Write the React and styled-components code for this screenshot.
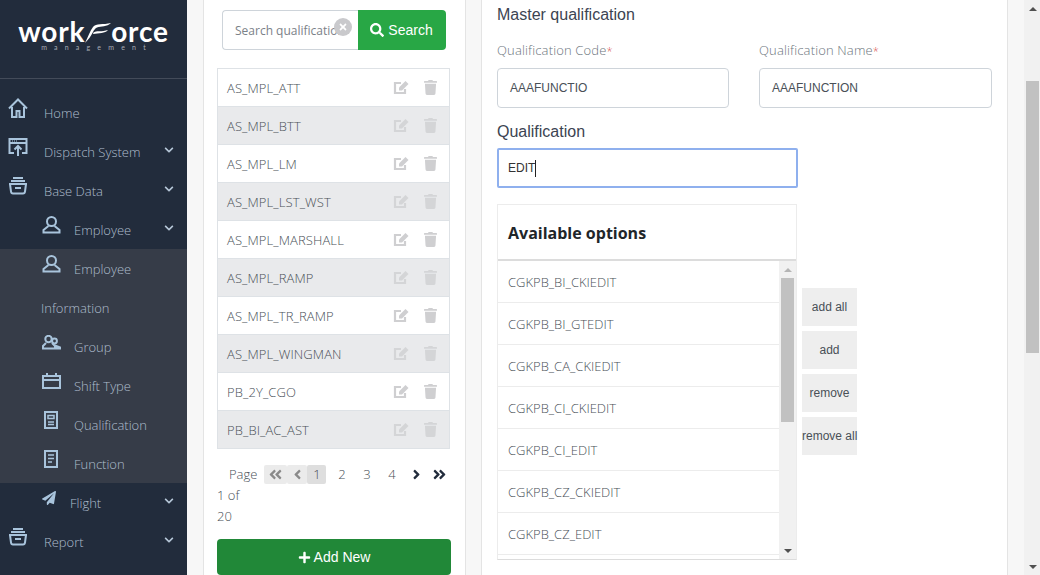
import styled, { createGlobalStyle } from 'styled-components'
import {
  FaChevronDown,
  FaTrash,
  FaSearch,
  FaPlus,
  FaTimes,
  FaPaperPlane,
  FaAngleDoubleLeft,
  FaAngleDoubleRight,
  FaAngleLeft,
  FaAngleRight,
} from 'react-icons/fa'

const GlobalStyle = createGlobalStyle`
  html, body {
    margin: 0;
    padding: 0;
    height: 575px;
    overflow: hidden;
  }
  * { box-sizing: border-box; }
`

const Page = styled.div`
  display: flex;
  width: 1040px;
  height: 575px;
  overflow: hidden;
  background: #f7f7f7;
  font-family: 'Open Sans', sans-serif;
`

const Sidebar = styled.nav`
  flex: 0 0 187px;
  background: #222c3c;
  display: flex;
  flex-direction: column;
`
const LogoBlock = styled.div`
  height: 79px;
  flex: none;
  border-bottom: 1px solid #434b59;
  padding-top: 19px;
  display: flex;
  flex-direction: column;
  align-items: center;
`
const LogoWord = styled.div`
  display: flex;
  align-items: flex-end;
  height: 24px;
  color: #fff;
  font-family: 'Lato', sans-serif;
  font-size: 28px;
  font-weight: 700;
  line-height: 24px;
  letter-spacing: 0.8px;
`
const LogoSub = styled.div`
  color: #a9adb5;
  font-family: 'Lato', sans-serif;
  font-size: 7px;
  line-height: 8px;
  letter-spacing: 7.2px;
  margin-left: 7px;
`
const Menu = styled.div`
  padding-top: 14px;
  display: flex;
  flex-direction: column;
`
const SubMenu = styled.div`
  background: #363c48;
  display: flex;
  flex-direction: column;
`
const MenuRow = styled.div`
  height: 39px;
  display: flex;
  align-items: center;
  padding-left: ${(p) => p.$indent}px;
  padding-right: 13px;
  color: #aebccd;
  font-size: 13px;
  font-weight: 300;
`
const MenuIcon = styled.span`
  flex: 0 0 ${(p) => p.$width}px;
  height: 20px;
  margin-top: -9px;
  display: flex;
  align-items: center;
  color: #a9c4dc;
`
const MenuLabel = styled.span`
  flex: 1;
`
const MenuChevron = styled(FaChevronDown)`
  font-size: 10px;
  color: #b6c7d8;
  margin-top: -4px;
`

const LeftPanel = styled.section`
  flex: 0 0 263px;
  margin-left: 16px;
  background: #fff;
  border-left: 1px solid #e4e4e4;
  border-right: 1px solid #e4e4e4;
  padding: 10px 14px 0 13px;
`
const SearchGroup = styled.div`
  display: flex;
  height: 40px;
  margin: 0 5px 18px 5px;
`
const SearchField = styled.div`
  position: relative;
  flex: 1;
  border: 1px solid #ced4da;
  border-right: 0;
  border-radius: 4px 0 0 4px;
  padding-left: 12px;
  display: flex;
  align-items: center;
  overflow: hidden;
  white-space: nowrap;
  color: #7b8188;
  font-size: 12px;
`
const ClearButton = styled.span`
  position: absolute;
  right: 6px;
  top: 7px;
  width: 18px;
  height: 18px;
  border-radius: 50%;
  background: #c9c9cc;
  color: #fff;
  display: flex;
  align-items: center;
  justify-content: center;
  font-size: 10px;
`
const SearchButton = styled.button`
  flex: 0 0 88px;
  border: 0;
  border-radius: 0 4px 4px 0;
  background: #28a745;
  color: #fff;
  font-family: 'Liberation Sans', sans-serif;
  font-size: 14px;
  display: flex;
  align-items: center;
  justify-content: center;
  gap: 4px;
  padding: 0 1px 0 0;
`
const QualList = styled.ul`
  list-style: none;
  margin: 0;
  padding: 0;
  width: 233px;
  border: 1px solid #dee2e6;
  border-bottom: 0;
`
const QualRow = styled.li`
  height: 38px;
  display: flex;
  align-items: center;
  padding: 0 12px 0 9px;
  border-bottom: 1px solid #dee2e6;
  background: ${(p) => (p.$striped ? '#e9eaec' : '#fff')};
  color: #495057;
  font-size: 13px;
  font-weight: 300;
  letter-spacing: 0.1px;
`
const QualName = styled.span`
  flex: 1;
`
const EditGlyph = styled.svg`
  display: block;
  margin-right: 14px;
  color: ${(p) => (p.$faded ? '#d4d5d7' : '#cfcfd1')};
`
const TrashIcon = styled(FaTrash)`
  font-size: 13px;
  width: 13px;
  height: 15px;
  color: ${(p) => (p.$faded ? '#d4d5d7' : '#cfcfd1')};
`
const PagerBlock = styled.div`
  margin-top: 15px;
  color: #495057;
  font-size: 13px;
  font-weight: 300;
  line-height: 21px;
`
const PagerRow = styled.div`
  display: flex;
  align-items: center;
  height: 21px;
  padding-left: 12px;
`
const PagerText = styled.span`
  margin-right: 7px;
`
const PagerCell = styled.span`
  width: ${(p) => p.$w || 25}px;
  height: 19px;
  margin-right: ${(p) => (p.$current ? 3 : 0)}px;
  display: flex;
  align-items: center;
  justify-content: center;
  background: ${(p) => (p.$current ? '#dedede' : p.$muted ? '#ebebeb' : 'transparent')};
  color: ${(p) => (p.$muted ? '#8a8a8a' : p.$dark ? '#222c3c' : '#495057')};
  border-radius: 2px;
  font-size: ${(p) => (p.$icon ? 15 : 13)}px;
`
const PagerLine = styled.div`
  height: 21px;
`
const AddButton = styled.button`
  display: flex;
  align-items: center;
  justify-content: center;
  gap: 3px;
  width: 234px;
  height: 36px;
  margin-top: 12px;
  border: 0;
  border-radius: 4px;
  background: #218838;
  color: #fff;
  font-family: 'Liberation Sans', sans-serif;
  font-size: 14px;
  padding: 0;
`

const RightPanel = styled.section`
  flex: 0 0 527px;
  margin-left: 15px;
  background: #fff;
  border-left: 1px solid #e4e4e4;
  border-right: 1px solid #e4e4e4;
  padding: 6px 14px 0 15px;
`
const PanelTitle = styled.div`
  color: #3c4452;
  font-family: 'Liberation Sans', sans-serif;
  font-size: 16px;
  line-height: 18px;
  margin-bottom: 17px;
`
const FieldRow = styled.div`
  display: flex;
  gap: 30px;
`
const Field = styled.div`
  flex: 0 0 ${(p) => p.$w}px;
`
const FieldLabel = styled.label`
  display: block;
  color: #6c757d;
  font-size: 13px;
  font-weight: 300;
  line-height: 18px;
  margin-bottom: 8px;
  letter-spacing: 0.15px;
`
const Required = styled.span`
  color: #d9534f;
  font-size: 11px;
`
const TextInput = styled.div`
  height: 40px;
  border: 1px solid #ced4da;
  border-radius: 4px;
  padding-left: 12px;
  display: flex;
  align-items: center;
  color: #495057;
  font-family: 'Liberation Sans', sans-serif;
  font-size: 12px;
`
const SectionLabel = styled.div`
  color: #3c4452;
  font-family: 'Liberation Sans', sans-serif;
  font-size: 16px;
  line-height: 18px;
  margin-top: 15px;
  margin-bottom: 7px;
`
const FocusInput = styled.div`
  width: 301px;
  height: 40px;
  border: 2px solid #8fb0ee;
  border-radius: 2px;
  padding-left: 9px;
  display: flex;
  align-items: center;
  color: #333;
  font-family: 'Liberation Sans', sans-serif;
  font-size: 12px;
`
const Caret = styled.span`
  width: 1px;
  height: 17px;
  background: #222;
`
const PickerRow = styled.div`
  display: flex;
  align-items: center;
  margin-top: 16px;
`
const OptionBox = styled.div`
  flex: 0 0 300px;
  height: 356px;
  border: 1px solid #ececec;
  border-bottom: 1px solid #dcdcdc;
  display: flex;
  flex-direction: column;
`
const OptionHeader = styled.div`
  flex: 0 0 56px;
  padding: 2px 0 0 10px;
  display: flex;
  align-items: center;
  color: #212529;
  font-size: 16px;
  font-weight: 700;
  border-bottom: 2px solid #dcdcdc;
`
const OptionScroller = styled.div`
  flex: 1;
  min-height: 0;
  display: flex;
  overflow: hidden;
`
const OptionList = styled.div`
  flex: 1;
  overflow: hidden;
`
const OptionRow = styled.div`
  height: 42px;
  padding-left: 10px;
  display: flex;
  align-items: center;
  border-bottom: 1px solid #ececec;
  color: #495057;
  font-size: 13px;
  font-weight: 300;
`
const ScrollTrack = styled.div`
  flex: 0 0 ${(p) => p.$w}px;
  background: #f1f1f1;
  display: flex;
  flex-direction: column;
  align-items: center;
  height: 100%;
`
const ScrollCap = styled.div`
  flex: 0 0 17px;
  width: 100%;
  display: flex;
  align-items: center;
  justify-content: center;
`
const ScrollSpacer = styled.div`
  flex: 1;
  width: 100%;
`
const ScrollThumb = styled.div`
  width: 13px;
  height: ${(p) => p.$h}px;
  margin-top: ${(p) => p.$top || 0}px;
  flex: none;
  background: #c1c1c1;
`
const Arrow = styled.span`
  width: 0;
  height: 0;
  border-left: 4px solid transparent;
  border-right: 4px solid transparent;
  ${(p) =>
    p.$down
      ? `border-top: 4px solid ${p.$color};`
      : `border-bottom: 4px solid ${p.$color};`}
`
const ShiftButtons = styled.div`
  display: flex;
  flex-direction: column;
  gap: 5px;
  margin-left: 5px;
  margin-top: -21px;
`
const ShiftButton = styled.button`
  width: 55px;
  height: 38px;
  border: 0;
  padding: 0;
  background: #eee;
  color: #495057;
  font-family: 'Liberation Sans', sans-serif;
  font-size: 12px;
  white-space: nowrap;
`
const Gutter = styled.div`
  flex: 0 0 16px;
`
const PageScroll = styled(ScrollTrack)`
  height: 575px;
`

const Svg = styled.svg`
  display: block;
  fill: none;
  stroke: currentColor;
  stroke-width: 2;
`

const HomeIcon = () => (
  <Svg width='20' height='20' viewBox='0 0 20 20'>
    <path d='M1 10.500 10 1.500l9 9' />
    <path d='M4 9v10h4.500v-6h3v6H16V9' />
  </Svg>
)
const WindowIcon = () => (
  <Svg width='20' height='19' viewBox='0 0 20 19'>
    <path d='M6 15H1.500V1h17v14H14M1.500 5h17' />
    <path d='M10 18V8M6.500 11.500 10 8l3.500 3.500' />
    <path d='M4 3h6' strokeDasharray='1 1' strokeWidth='1' />
  </Svg>
)
const BoxIcon = () => (
  <Svg width='20' height='18' viewBox='0 0 20 18'>
    <path d='M5 1h10M3 4h14M1 7h18' />
    <path d='M2 7l1 7.500q.2 2 2 2h10q1.800 0 2-2L18 7M7 11h6' />
  </Svg>
)
const PersonIcon = () => (
  <Svg width='19' height='18' viewBox='0 0 19 18'>
    <circle cx='9.500' cy='5.500' r='4.500' />
    <path d='M6.500 10 1.500 14v2.500h16V14l-5-4' />
  </Svg>
)
const GroupIcon = () => (
  <Svg width='19' height='15' viewBox='0 0 19 15' strokeWidth='1.6'>
    <circle cx='6.500' cy='4' r='3.200' />
    <circle cx='12.500' cy='6' r='2.400' />
    <path d='M4 8 1 11v2.500h12V11l-3-3M13 10.500l5 2v1h-5' />
  </Svg>
)
const CalendarIcon = () => (
  <Svg width='19' height='16' viewBox='0 0 19 16'>
    <path d='M1 3h17v12H1zM1 7h17M5 0v4M14 0v4' />
  </Svg>
)
const DocIcon = ({ lines }) => (
  <Svg width='14' height='18' viewBox='0 0 14 18'>
    <path d='M1 1h12v16H1z' />
    {lines ? (
      <path d='M4 5h6M4 8.500h6M4 12h4' strokeWidth='1.500' />
    ) : (
      <path d='M4 4.500h6v3H4zM4 11h6M4 13.500h6' strokeWidth='1.500' />
    )}
  </Svg>
)
const LogoSwoosh = () => (
  <svg width='26' height='20' viewBox='0 0 26 20' fill='#fff'>
    <path d='M0 20C3 14 5 8 8 4 11 0 18 2 26 0 22 4 16 3 12 4.500 10 5.500 9 7 8 9 6 13 3 17 0 20Z' />
    <path d='M8.500 9.500C11 7.500 17 9 23 7 20 10.500 14 10 8 11Z' />
  </svg>
)
const EditIcon = ({ faded }) => (
  <EditGlyph $faded={faded} width='17' height='15' viewBox='0 0 17 15' fill='none'>
    <path d='M12 9v4H2V3h6' stroke='currentColor' strokeWidth='2.200' />
    <path d='M6 7.500 12.500 1l3 3L9 10.500H6z' fill='currentColor' />
  </EditGlyph>
)

const qualifications = [
  'AS_MPL_ATT',
  'AS_MPL_BTT',
  'AS_MPL_LM',
  'AS_MPL_LST_WST',
  'AS_MPL_MARSHALL',
  'AS_MPL_RAMP',
  'AS_MPL_TR_RAMP',
  'AS_MPL_WINGMAN',
  'PB_2Y_CGO',
  'PB_BI_AC_AST',
]

const options = [
  'CGKPB_BI_CKIEDIT',
  'CGKPB_BI_GTEDIT',
  'CGKPB_CA_CKIEDIT',
  'CGKPB_CI_CKIEDIT',
  'CGKPB_CI_EDIT',
  'CGKPB_CZ_CKIEDIT',
  'CGKPB_CZ_EDIT',
]

function MenuItem({ indent, iconWidth, icon, label, chevron }) {
  return (
    <MenuRow $indent={indent}>
      {icon && <MenuIcon $width={iconWidth}>{icon}</MenuIcon>}
      <MenuLabel>{label}</MenuLabel>
      {chevron && <MenuChevron />}
    </MenuRow>
  )
}

function App() {
  return (
    <>
      <GlobalStyle />
      <Page>
        <Sidebar>
          <LogoBlock>
            <LogoWord>
              work
              <LogoSwoosh />
              orce
            </LogoWord>
            <LogoSub>management</LogoSub>
          </LogoBlock>
          <Menu>
            <MenuItem indent={8} iconWidth={36} icon={<HomeIcon />} label='Home' />
            <MenuItem indent={8} iconWidth={36} icon={<WindowIcon />} label='Dispatch System' chevron />
            <MenuItem indent={8} iconWidth={36} icon={<BoxIcon />} label='Base Data' chevron />
            <MenuItem indent={42} iconWidth={32} icon={<PersonIcon />} label='Employee' chevron />
            <SubMenu>
              <MenuItem indent={42} iconWidth={32} icon={<PersonIcon />} label='Employee' />
              <MenuItem indent={41} label='Information' />
              <MenuItem indent={42} iconWidth={32} icon={<GroupIcon />} label='Group' />
              <MenuItem indent={42} iconWidth={32} icon={<CalendarIcon />} label='Shift Type' />
              <MenuItem indent={44} iconWidth={30} icon={<DocIcon />} label='Qualification' />
              <MenuItem indent={44} iconWidth={30} icon={<DocIcon lines />} label='Function' />
            </SubMenu>
            <MenuItem indent={42} iconWidth={28} icon={<FaPaperPlane size={14} />} label='Flight' chevron />
            <MenuItem indent={8} iconWidth={36} icon={<BoxIcon />} label='Report' chevron />
          </Menu>
        </Sidebar>

        <LeftPanel>
          <SearchGroup>
            <SearchField>
              Search qualification
              <ClearButton>
                <FaTimes />
              </ClearButton>
            </SearchField>
            <SearchButton>
              <FaSearch size={14} /> Search
            </SearchButton>
          </SearchGroup>
          <QualList>
            {qualifications.map((name, i) => (
              <QualRow key={name} $striped={i % 2 === 1}>
                <QualName>{name}</QualName>
                <EditIcon faded={i % 2 === 1} />
                <TrashIcon $faded={i % 2 === 1} />
              </QualRow>
            ))}
          </QualList>
          <PagerBlock>
            <PagerRow>
              <PagerText>Page</PagerText>
              <PagerCell $muted $icon $w={23}>
                <FaAngleDoubleLeft />
              </PagerCell>
              <PagerCell $muted $icon $w={20}>
                <FaAngleLeft />
              </PagerCell>
              <PagerCell $current $w={19}>1</PagerCell>
              <PagerCell>2</PagerCell>
              <PagerCell>3</PagerCell>
              <PagerCell>4</PagerCell>
              <PagerCell $dark $icon>
                <FaAngleRight />
              </PagerCell>
              <PagerCell $dark $icon $w={20}>
                <FaAngleDoubleRight />
              </PagerCell>
            </PagerRow>
            <PagerLine>1 of</PagerLine>
            <PagerLine>20</PagerLine>
          </PagerBlock>
          <AddButton>
            <FaPlus size={13} /> Add New
          </AddButton>
        </LeftPanel>

        <RightPanel>
          <PanelTitle>Master qualification</PanelTitle>
          <FieldRow>
            <Field $w={232}>
              <FieldLabel>
                Qualification Code<Required>*</Required>
              </FieldLabel>
              <TextInput>AAAFUNCTIO</TextInput>
            </Field>
            <Field $w={233}>
              <FieldLabel>
                Qualification Name<Required>*</Required>
              </FieldLabel>
              <TextInput>AAAFUNCTION</TextInput>
            </Field>
          </FieldRow>
          <SectionLabel>Qualification</SectionLabel>
          <FocusInput>
            EDIT
            <Caret />
          </FocusInput>
          <PickerRow>
            <OptionBox>
              <OptionHeader>Available options</OptionHeader>
              <OptionScroller>
                <OptionList>
                  {options.map((name) => (
                    <OptionRow key={name}>{name}</OptionRow>
                  ))}
                </OptionList>
                <ScrollTrack $w={17}>
                  <ScrollCap>
                    <Arrow $color='#b5b5b5' />
                  </ScrollCap>
                  <ScrollThumb $h={144} />
                  <ScrollSpacer />
                  <ScrollCap>
                    <Arrow $down $color='#505050' />
                  </ScrollCap>
                </ScrollTrack>
              </OptionScroller>
            </OptionBox>
            <ShiftButtons>
              <ShiftButton>add all</ShiftButton>
              <ShiftButton>add</ShiftButton>
              <ShiftButton>remove</ShiftButton>
              <ShiftButton>remove all</ShiftButton>
            </ShiftButtons>
          </PickerRow>
        </RightPanel>

        <Gutter />
        <PageScroll $w={17}>
          <ScrollCap>
            <Arrow $color='#505050' />
          </ScrollCap>
          <ScrollThumb $h={272} $top={64} />
          <ScrollSpacer />
          <ScrollCap>
            <Arrow $down $color='#505050' />
          </ScrollCap>
        </PageScroll>
      </Page>
    </>
  )
}

export default App
